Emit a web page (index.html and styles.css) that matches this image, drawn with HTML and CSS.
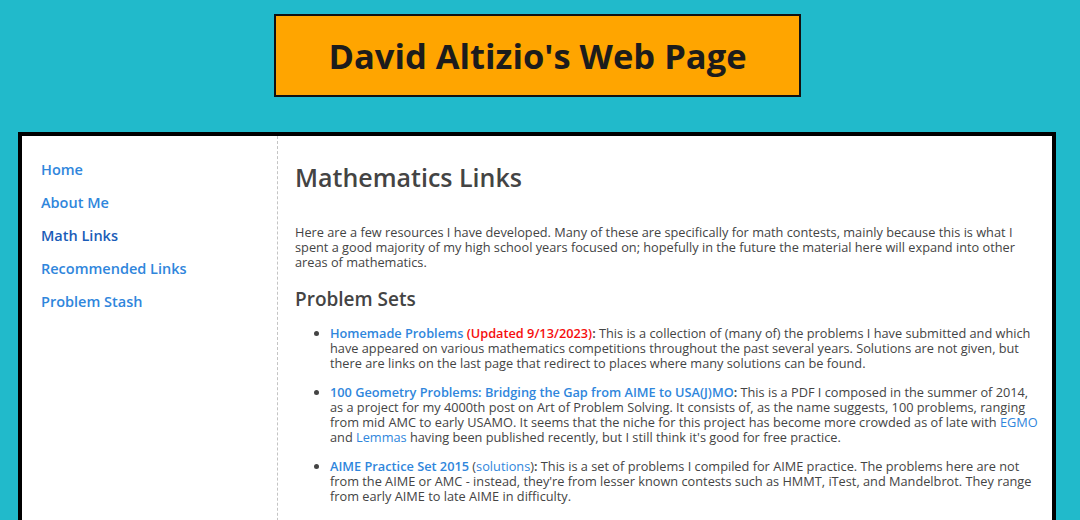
FILE: index.html
```html
<!DOCTYPE html>
<html lang="en">
<head>
    <meta charset="UTF-8">
    <title>David Altizio's Web Page</title>
    <link rel="stylesheet" href="styles.css">
</head>
<body>
    <!-- Title banner -->
    <div id="banner">
        <h1>David Altizio's Web Page</h1>
    </div>

    <!-- Main box -->
    <div id="wrapper">
        <div id="sidebar">
            <a href="#">Home</a>
            <a href="#">About Me</a>
            <a href="#" class="current">Math Links</a>
            <a href="#">Recommended Links</a>
            <a href="#">Problem Stash</a>
        </div>
        <div id="content">
            <h2>Mathematics Links</h2>
            <p>Here are a few resources I have developed. Many of these are specifically for math contests, mainly because this is what I spent a good majority of my high school years focused on; hopefully in the future the material here will expand into other areas of mathematics.</p>

            <h3>Problem Sets</h3>
            <ul>
                <li><b><a href="#">Homemade Problems</a> <span class="updated">(Updated 9/13/2023)</span>:</b> This is a collection of (many of) the problems I have submitted and which have appeared on various mathematics competitions throughout the past several years. Solutions are not given, but there are links on the last page that redirect to places where many solutions can be found.</li>
                <li><b><a href="#">100 Geometry Problems: Bridging the Gap from AIME to USA(J)MO</a>:</b> This is a PDF I composed in the summer of 2014, as a project for my 4000th post on Art of Problem Solving. It consists of, as the name suggests, 100 problems, ranging from mid AMC to early USAMO. It seems that the niche for this project has become more crowded as of late with <a href="#">EGMO</a> and <a href="#">Lemmas</a> having been published recently, but I still think it's good for free practice.</li>
                <li><b><a href="#">AIME Practice Set 2015</a></b> (<a href="#">solutions</a>)<b>:</b> This is a set of problems I compiled for AIME practice. The problems here are not from the AIME or AMC - instead, they're from lesser known contests such as HMMT, iTest, and Mandelbrot. They range from early AIME to late AIME in difficulty.</li>
            </ul>
        </div>
    </div>
</body>
</html>
```
FILE: styles.css
```css
body {
    margin: 0;
    padding: 0;
    background-color: #21bacb;
    font-family: "Open Sans", sans-serif;
    color: #444;
}

a {
    color: #2f86dc;
    text-decoration: none;
}

b {
    font-weight: 600;
}

#banner {
    width: 527px;
    height: 83px;
    box-sizing: border-box;
    margin: 14px 0 0 274px;
    background-color: #ffa500;
    border: 2px solid #111;
    display: flex;
    align-items: center;
    justify-content: center;
}

#banner h1 {
    margin: 0;
    font-size: 34.5px;
    font-weight: bold;
    color: #1c1c1c;
    line-height: 40px;
}

#wrapper {
    display: flex;
    margin: 35px 24px 0 18px;
    border: 4px solid #000;
    background-color: #fff;
    min-height: 420px;
}

#sidebar {
    width: 256px;
    flex-shrink: 0;
    padding: 17px 0 0 19px;
    box-sizing: border-box;
    border-right: 1px dashed #c4c4c4;
}

#sidebar a {
    display: block;
    font-size: 14.5px;
    font-weight: 600;
    line-height: 33px;
}

#sidebar a.current {
    color: #1a5cb8;
}

#content {
    flex: 1;
    padding: 26px 14px 0 17px;
    font-size: 12.75px;
    line-height: 15px;
}

#content h2 {
    margin: 0;
    font-size: 25px;
    line-height: 30px;
    font-weight: 600;
}

#content p {
    margin: 33px 0 0 0;
}

#content h3 {
    margin: 17px 0 0 0;
    font-size: 19px;
    line-height: 24px;
    font-weight: 600;
}

#content ul {
    margin: 15px 0 0 0;
    padding-left: 35px;
}

#content li {
    margin-bottom: 14px;
}

.updated {
    color: #f50d0d;
}
```
